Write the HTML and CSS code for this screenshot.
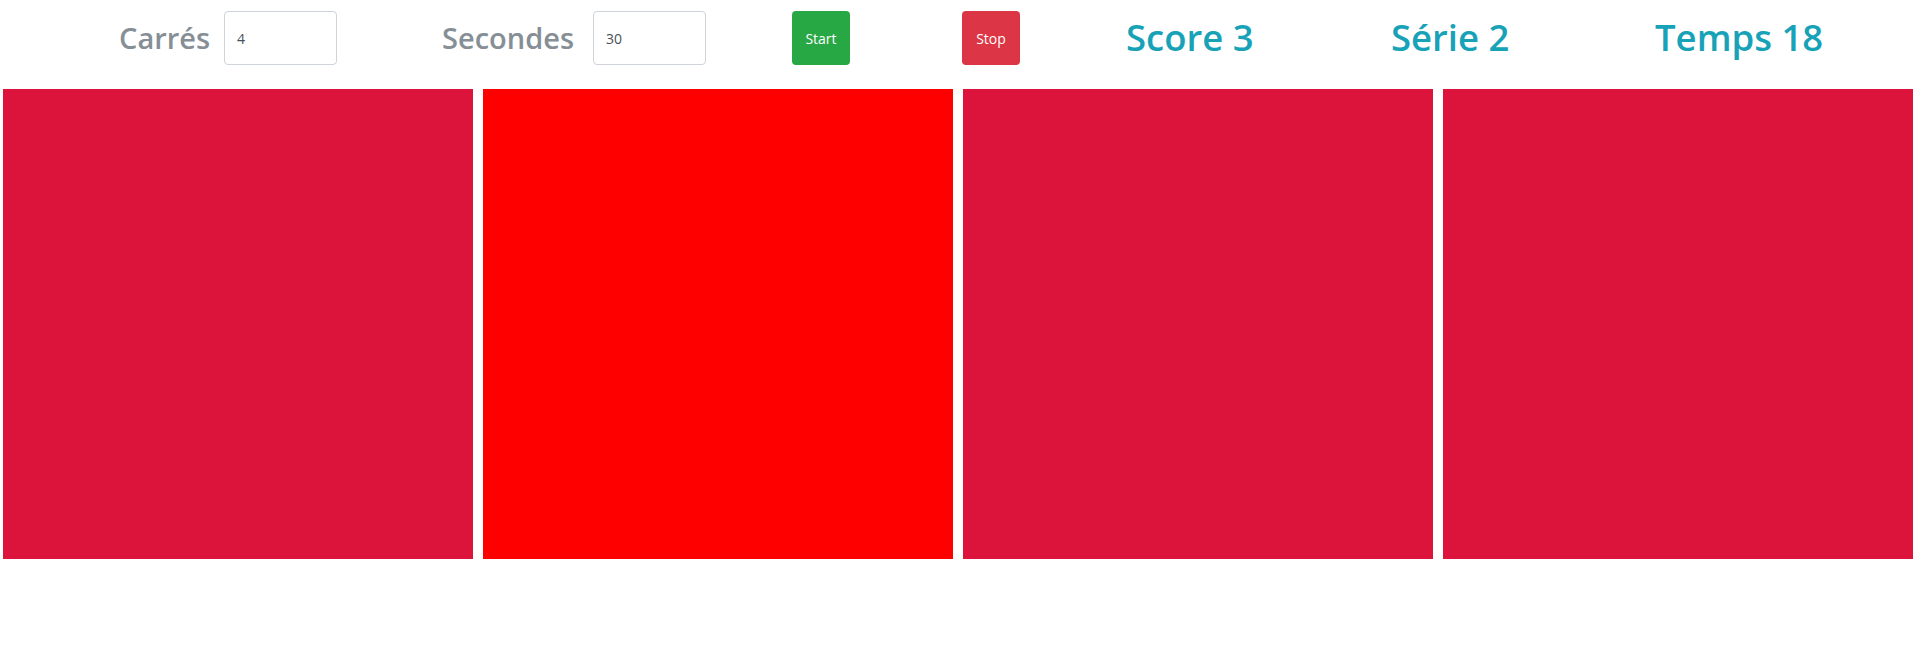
FILE: index.html
```html
<!DOCTYPE html>
<html lang="fr">
<head>
<meta charset="utf-8">
<title>Carrés</title>
<link rel="stylesheet" href="styles.css">
</head>
<body>
<header class="toolbar">
  <div class="field field-carres">
    <h2 class="label">Carrés</h2>
    <input class="num-input" type="text" value="4">
  </div>
  <div class="field field-secondes">
    <h2 class="label">Secondes</h2>
    <input class="num-input" type="text" value="30">
  </div>
  <button class="btn btn-start">Start</button>
  <button class="btn btn-stop">Stop</button>
  <h1 class="stat stat-score">Score 3</h1>
  <h1 class="stat stat-serie">Série 2</h1>
  <h1 class="stat stat-temps">Temps 18</h1>
</header>
<main class="board">
  <div class="square crimson"></div>
  <div class="square red"></div>
  <div class="square crimson"></div>
  <div class="square crimson"></div>
</main>
</body>
</html>
```
FILE: styles.css
```css
* { box-sizing: border-box; }
html, body { margin: 0; padding: 0; background: #fff; }
body {
  width: 1913px;
  height: 668px;
  overflow: hidden;
  font-family: "Open Sans", "Noto Sans", sans-serif;
}
.toolbar {
  display: flex;
  align-items: center;
  height: 76px;
}
.field {
  display: flex;
  align-items: center;
  justify-content: space-between;
}
.field-carres { margin-left: 119px; width: 218px; }
.field-secondes { margin-left: 105px; width: 264px; }
.label, .stat {
  margin: 0;
  font-weight: 600;
  line-height: 1.2;
}
.label { color: #868e96; font-size: 29px; }
.stat { color: #17a2b8; font-size: 36.5px; }
.num-input {
  width: 113px;
  height: 54px;
  border: 1px solid #ced4da;
  border-radius: 4px;
  padding: 0 12px;
  font-family: "Open Sans", sans-serif;
  font-size: 14px;
  color: #495057;
  background: #fff;
}
.btn {
  width: 58px;
  height: 54px;
  border: none;
  border-radius: 4px;
  color: #fff;
  font-family: "Open Sans", sans-serif;
  font-size: 14px;
  padding: 0;
}
.btn-start { background: #28a745; margin-left: 86px; }
.btn-stop { background: #dc3545; margin-left: 112px; }
.stat-score { margin-left: 106px; width: 265px; }
.stat-serie { width: 264px; }
.board {
  display: flex;
  gap: 10px;
  padding-left: 3px;
  margin-top: 13px;
}
.square { flex: 0 0 470px; height: 470px; }
.crimson { background: #dc143c; }
.red { background: #ff0000; }
```
